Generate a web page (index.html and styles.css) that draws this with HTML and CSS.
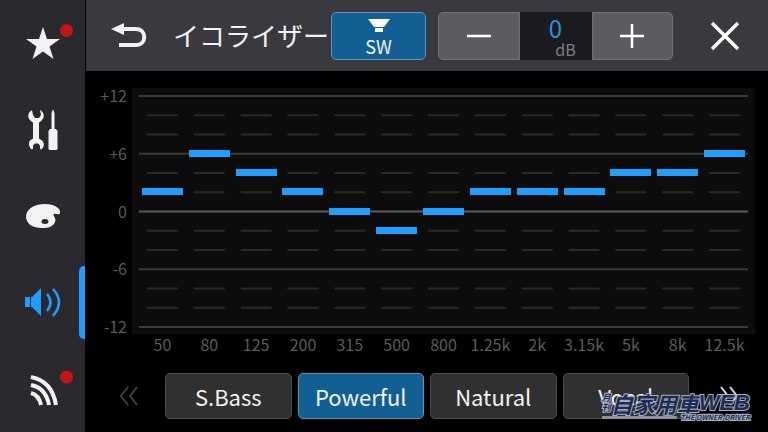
FILE: index.html
```html
<!DOCTYPE html>
<html lang="ja">
<head>
    <meta charset="UTF-8">
    <meta name="viewport" content="width=device-width, initial-scale=1.0">
    <title>イコライザー</title>
    <link rel="stylesheet" href="styles.css">
</head>
<body>

<nav class="sidebar">
    <a href="#favorites" aria-label="Favorites">
        <svg width="60" height="60" viewBox="0 0 60 60" fill="#f2f2f2">
            <path d="M30 14l4 12h13l-10.500 7.500 4 12.500-10.500-7.500L19.500 46l4-12.500L13 26h13z"/>
            <circle cx="53.500" cy="17.500" r="6.500" fill="#c41414"/>
        </svg>
    </a>
    <a href="#settings" aria-label="Settings">
        <svg width="60" height="60" viewBox="0 0 60 60" fill="#f2f2f2">
            <path d="M19 10c-4 2-5 7-2 10 1 1 2 2 3 2.500v16c-1 1-2 1-3 2-2 3-1 7 2 9l1-1v-3l2-2h3l2 2v3l1 1c3-2 4-6 1-9-1-1-2-1-3-2v-16c1-.5 2-1.500 3-2.500 3-3 2-8-2-10l1 5-2 3h-4l-2-3z"/>
            <path d="M38.500 29.500v-16l1-3.500h1l1 3.500v16zM37 29h6l1.500 2v18l-1 1h-7l-1-1V31z"/>
        </svg>
    </a>
    <a href="#theme" aria-label="Theme">
        <svg width="60" height="60" viewBox="0 0 60 60" fill="#f2f2f2">
            <path fill-rule="evenodd" d="M13 30c1-8 9-12 19-12 9 0 16 4 15 9-1 3-4 0-6 1-2 2 3 4 1 8-2 5-7 6-13 6-11 0-16-5-16-12zM28.500 35.500a3.500 2.500 0 1 0 7 0 3.500 2.500 0 1 0-7 0"/>
        </svg>
    </a>
    <a href="#audio" class="active" aria-label="Audio">
        <svg width="60" height="60" viewBox="0 0 60 60" fill="#1e9fff">
            <path d="M12 25h5v10h-5zM18 25h1l9-9v28l-9-9h-1z"/>
            <path d="M34 22q7 8 0 17M40 17q12 13 0 27" fill="none" stroke="#1e9fff" stroke-width="2.500"/>
        </svg>
    </a>
    <a href="#sources" aria-label="Sources">
        <svg width="60" height="60" viewBox="0 0 60 60" fill="none" stroke="#f2f2f2" stroke-width="4">
            <path d="M18 34q8 2 10 12M18 26q15 3 18 20M18 18q21 4 25 28"/>
            <circle cx="53.500" cy="18" r="6.500" fill="#c41414" stroke="none"/>
        </svg>
    </a>
</nav>

<main>
    <header class="topbar">
        <button class="plain back" aria-label="Back">
            <svg width="38" height="28" viewBox="0 0 38 28">
                <path d="M9 7h16c11 0 11 16 0 16H8" fill="none" stroke="#f2f2f2" stroke-width="4"/>
                <path d="M0 7l13-6v12z" fill="#f2f2f2"/>
            </svg>
        </button>
        <h1>イコライザー</h1>
        <button class="sw">
            <svg width="24" height="16" viewBox="0 0 24 16" fill="#fff">
                <path d="M1 1h22l-6 8H7zM8 10h8v4H8z"/>
            </svg>
            SW
        </button>
        <div class="stepper">
            <button aria-label="Decrease">
                <svg width="26" height="26" viewBox="0 0 26 26"><path d="M1 13h24" stroke="#fff" stroke-width="2.500"/></svg>
            </button>
            <output>0<small>dB</small></output>
            <button aria-label="Increase">
                <svg width="26" height="26" viewBox="0 0 26 26"><path d="M1 13h24M13 1v24" stroke="#fff" stroke-width="2.500"/></svg>
            </button>
        </div>
        <button class="plain close" aria-label="Close">
            <svg width="30" height="30" viewBox="0 0 30 30"><path d="M2 2l26 26M28 2L2 28" stroke="#fff" stroke-width="3.500"/></svg>
        </button>
    </header>

    <section class="chart">
        <div class="scale">
            <span>+12</span>
            <span>+6</span>
            <span>0</span>
            <span>-6</span>
            <span>-12</span>
        </div>
        <div class="plot">
            <svg class="lines" viewBox="0 0 1300 240" preserveAspectRatio="none">
                <path class="minor" d="M17 20H1300M17 40H1300M17 80H1300M17 100H1300M17 140H1300M17 160H1300M17 200H1300M17 220H1300"/>
                <path class="major" d="M0 0H1300M0 60H1300M0 180H1300M0 240H1300"/>
                <path class="zero" d="M0 120H1300"/>
            </svg>
            <div class="bands">
                <input type="range" id="b50" min="-12" max="12" value="2">
                <input type="range" id="b80" min="-12" max="12" value="6">
                <input type="range" id="b125" min="-12" max="12" value="4">
                <input type="range" id="b200" min="-12" max="12" value="2">
                <input type="range" id="b315" min="-12" max="12" value="0">
                <input type="range" id="b500" min="-12" max="12" value="-2">
                <input type="range" id="b800" min="-12" max="12" value="0">
                <input type="range" id="b1250" min="-12" max="12" value="2">
                <input type="range" id="b2000" min="-12" max="12" value="2">
                <input type="range" id="b3150" min="-12" max="12" value="2">
                <input type="range" id="b5000" min="-12" max="12" value="4">
                <input type="range" id="b8000" min="-12" max="12" value="4">
                <input type="range" id="b12500" min="-12" max="12" value="6">
            </div>
        </div>
        <div class="freqs">
            <label for="b50">50</label>
            <label for="b80">80</label>
            <label for="b125">125</label>
            <label for="b200">200</label>
            <label for="b315">315</label>
            <label for="b500">500</label>
            <label for="b800">800</label>
            <label for="b1250">1.25k</label>
            <label for="b2000">2k</label>
            <label for="b3150">3.15k</label>
            <label for="b5000">5k</label>
            <label for="b8000">8k</label>
            <label for="b12500">12.5k</label>
        </div>
    </section>

    <footer class="presets">
        <button class="plain prev" aria-label="Previous presets">
            <svg width="20" height="20" viewBox="0 0 20 20" fill="none" stroke="#404040" stroke-width="2"><path d="M9 1L2 10l7 9M18 1l-7 9 7 9"/></svg>
        </button>
        <div class="preset-list">
            <button>S.Bass</button>
            <button class="selected">Powerful</button>
            <button>Natural</button>
            <button>Vocal</button>
        </div>
        <button class="plain" aria-label="Next presets">
            <svg width="20" height="20" viewBox="0 0 20 20" fill="none" stroke="#d8d8d8" stroke-width="2"><path d="M2 1l7 9-7 9M11 1l7 9-7 9"/></svg>
        </button>
    </footer>
</main>

<div class="watermark">
    <div class="brand">
        <div class="monthly"><span>月</span><span>刊</span></div>
        自家用車<span class="web">WEB</span>
    </div>
    <div class="tagline">THE OWNER-DRIVER</div>
</div>

</body>
</html>
```

FILE: styles.css
```css
* {
    box-sizing: border-box;
}
body {
    margin: 0;
    min-height: 100vh;
    display: flex;
    background-color: #000;
    color: #f2f2f2;
    font-family: "Noto Sans CJK JP", sans-serif;
}
button {
    font: inherit;
    color: inherit;
    padding: 0;
    cursor: pointer;
}
svg {
    display: block;
}

/* sidebar */
.sidebar {
    width: 85px;
    display: flex;
    flex-direction: column;
    background-color: #2a2a2e;
}
.sidebar a {
    flex: 1;
    display: flex;
    align-items: center;
    padding-left: 13px;
}
.sidebar .active {
    position: relative;
}
.sidebar .active::after {
    content: "";
    position: absolute;
    right: 0;
    top: 7px;
    bottom: 7px;
    width: 6px;
    border-radius: 5px 0 0 5px;
    background-color: #1e9fff;
}

main {
    flex: 1;
    min-width: 0;
    margin-left: 1px;
    display: flex;
    flex-direction: column;
}
.plain {
    background: none;
    border: none;
    display: flex;
    align-items: center;
    justify-content: center;
}

/* top bar */
.topbar {
    height: 71px;
    display: flex;
    align-items: center;
    background-color: #3a393d;
}
.back {
    width: 87px;
    height: 48px;
}
h1 {
    flex: 1;
    margin: 0;
    padding-bottom: 2px;
    font-size: 26px;
    font-weight: 400;
    line-height: 40px;
    white-space: nowrap;
}
.sw {
    width: 95px;
    height: 48px;
    padding-top: 4px;
    display: flex;
    flex-direction: column;
    align-items: center;
    justify-content: center;
    font-size: 18px;
    line-height: 24px;
    background-color: #125f94;
    border: 1px solid #5c93ba;
    border-radius: 5px;
}
.stepper {
    width: 235px;
    height: 48px;
    margin-left: 12px;
    display: grid;
    grid-template-columns: 1fr 72px 1fr;
}
.stepper button {
    display: flex;
    align-items: center;
    justify-content: center;
    background-color: #5c5b60;
    border: 1px solid #727176;
}
.stepper button:first-child {
    border-radius: 5px 0 0 5px;
}
.stepper button:last-child {
    border-radius: 0 5px 5px 0;
}
.stepper output {
    display: flex;
    flex-direction: column;
    align-items: center;
    justify-content: center;
    font-size: 24px;
    line-height: 26px;
    color: #2b8fd8;
    background-color: #1b1b1f;
}
.stepper small {
    padding-left: 20px;
    font-size: 16px;
    line-height: 16px;
    color: #7c7c80;
}
.close {
    width: 95px;
    height: 48px;
    padding-left: 8px;
}

/* equalizer */
.chart {
    flex: 1;
    padding: 17px 13px 0 0;
    display: grid;
    grid-template-columns: 46px 1fr;
    grid-template-rows: 1fr 22px;
    font-size: 16px;
    color: #5a5a5a;
}
.scale {
    padding-right: 5px;
    display: flex;
    flex-direction: column;
    justify-content: space-between;
    text-align: right;
    line-height: 15px;
}
.plot {
    display: grid;
    padding: 4px 7px;
    background-color: #0c0c0c;
}
.lines, .bands {
    grid-area: 1 / 1;
    width: 100%;
    min-height: 0;
}
.lines {
    height: calc(100% - 7px);
    align-self: center;
    overflow: visible;
    fill: none;
}
.minor {
    stroke: #2a2a2a;
    stroke-width: 2;
    stroke-dasharray: 66 34;
}
.major {
    stroke: #3b3b3b;
    stroke-width: 2;
}
.zero {
    stroke: #5a5a5a;
    stroke-width: 2;
}
.bands {
    display: grid;
    grid-template-columns: repeat(13, 1fr);
}
.bands input {
    appearance: none;
    writing-mode: vertical-lr;
    direction: rtl;
    width: 100%;
    height: 100%;
    min-width: 0;
    margin: 0;
    background: none;
}
.bands input::-webkit-slider-thumb {
    appearance: none;
    width: 41px;
    height: 7px;
    background-color: #1e9fff;
}
.freqs {
    grid-column: 2;
    padding: 0 7px;
    display: grid;
    grid-template-columns: repeat(13, 1fr);
    line-height: 20px;
}
.freqs label {
    min-width: 0;
    display: flex;
    justify-content: center;
    white-space: nowrap;
}

/* presets */
.presets {
    padding: 17px 0 13px;
    display: grid;
    grid-template-columns: 79px 1fr 79px;
}
.prev {
    padding-left: 6px;
}
.preset-list {
    display: grid;
    grid-template-columns: repeat(4, 1fr);
    gap: 6px;
}
.preset-list button {
    height: 46px;
    font-size: 22px;
    line-height: 32px;
    background-color: #303030;
    border: 1px solid #4c4c4c;
    border-radius: 5px;
}
.preset-list .selected {
    background-color: #125f94;
    border-color: #5c93ba;
}

/* publisher mark over the corner */
.watermark {
    position: absolute;
    right: 18px;
    bottom: 11px;
    font-style: italic;
    font-weight: 700;
    color: #1d2b57;
    paint-order: stroke;
    -webkit-text-stroke: 2px #a9b0c0;
}
.brand {
    display: flex;
    align-items: center;
    font-size: 22px;
    line-height: 20px;
}
.monthly {
    display: flex;
    flex-direction: column;
    font-size: 9px;
    line-height: 10px;
}
.web {
    font-family: "Liberation Sans", sans-serif;
}
.tagline {
    display: flex;
    align-items: center;
    gap: 3px;
    font-size: 7px;
    line-height: 8px;
    white-space: nowrap;
}
.tagline::before {
    content: "";
    flex: 1;
    height: 3px;
    background-color: #8d919c;
}
```
